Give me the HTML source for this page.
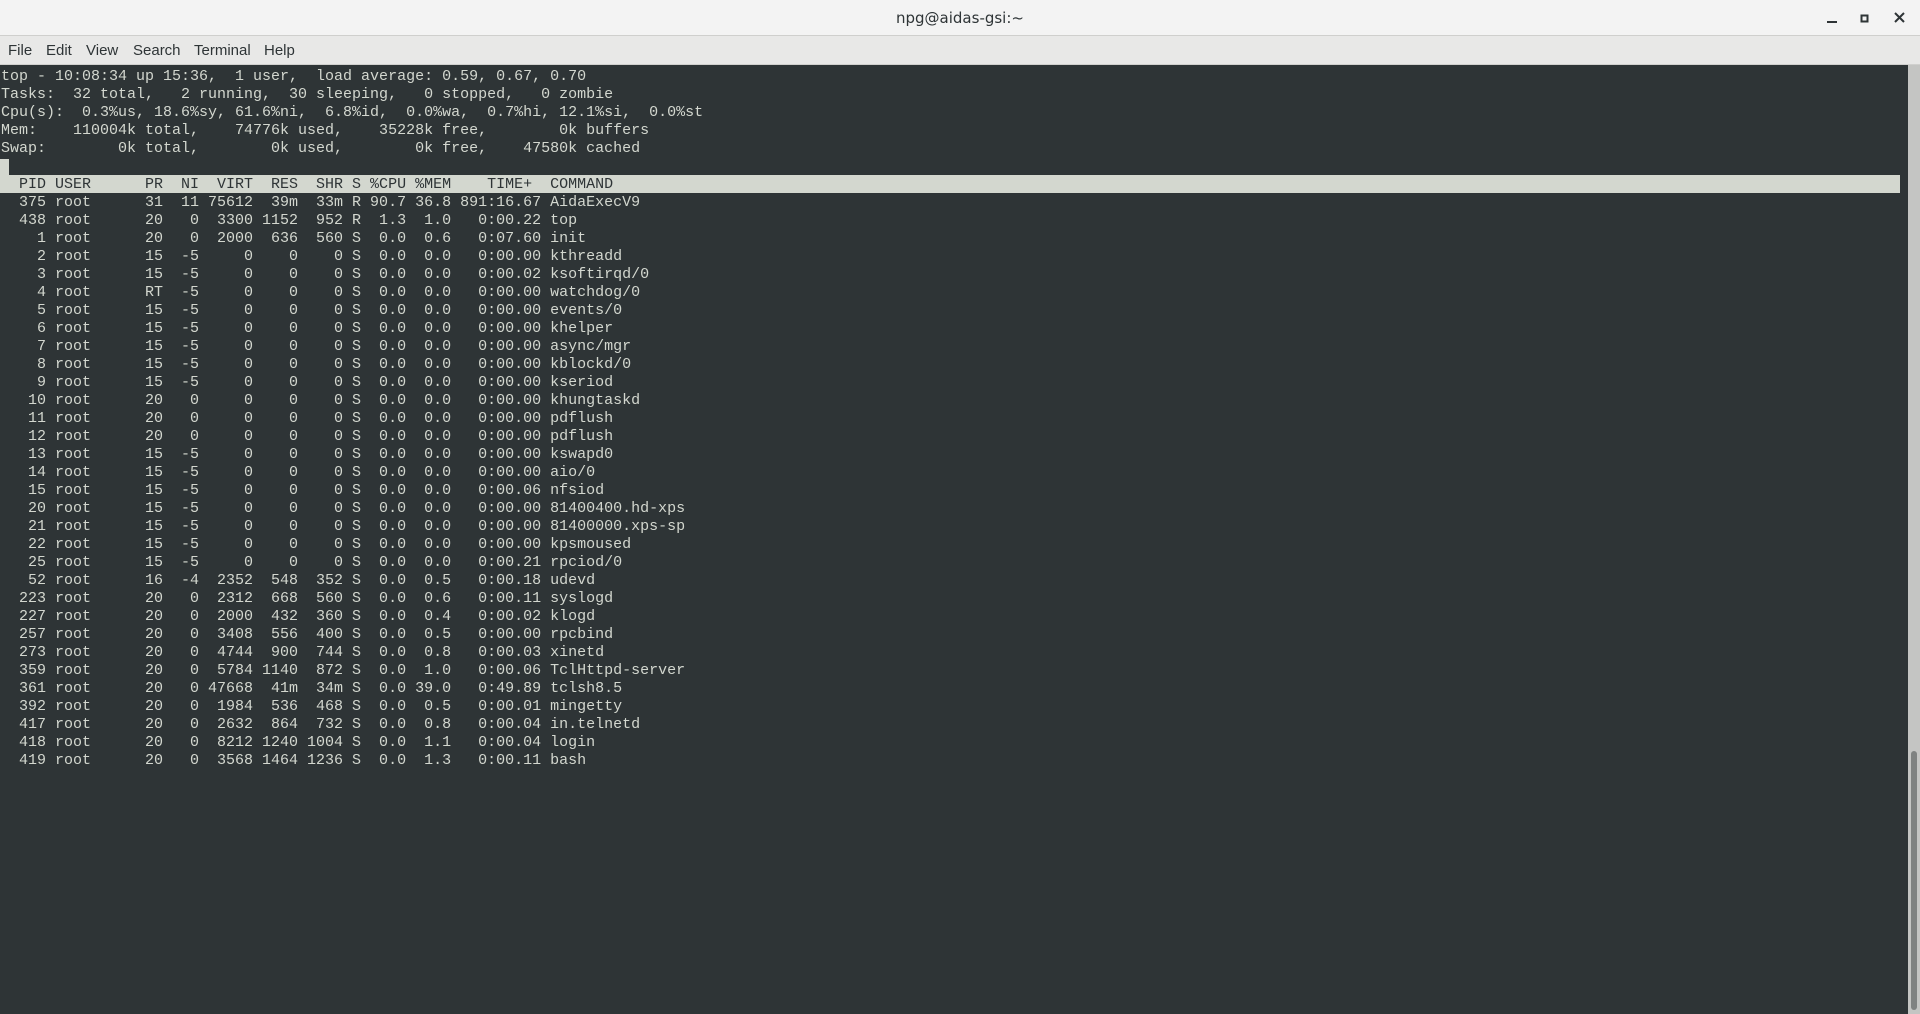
<!DOCTYPE html>
<html><head><meta charset="utf-8"><style>
html,body{margin:0;padding:0;width:1920px;height:1014px;overflow:hidden;background:#2e3436}
#title{position:absolute;left:0;top:0;width:1920px;height:35px;background:#f3f3f3;border-bottom:1px solid #cfcfcd;font:15px "DejaVu Sans",sans-serif;color:#2e3436;text-align:center;line-height:36px}
#menu{position:absolute;left:0;top:36px;width:1920px;height:28px;background:#e8e8e7;border-bottom:1px solid #d0d0ce;font:15px "Liberation Sans",sans-serif;color:#2e3436}
#menu span{position:absolute;top:6px}
#term{position:absolute;left:0;top:65px;width:1908px;height:949px;background:#2e3436}
pre{margin:0;position:absolute;left:1px;top:3px;font:15px/18px "Liberation Mono",monospace;color:#d3d7cf;letter-spacing:0}
.hl{position:absolute;left:0;top:110px;width:1900px;height:18px;background:#d3d7cf}
.cur{position:absolute;left:0;top:94px;width:9px;height:16px;background:#d3d7cf}
#sb{position:absolute;left:1908px;top:65px;width:12px;height:949px;background:#c4c5c3}
.ctl{position:absolute;top:11px}
</style></head><body>
<div id="title">npg@aidas-gsi:~</div>
<svg class="ctl" style="left:1826px" width="14" height="14"><rect x="1" y="10" width="10" height="2" fill="#2e3436"/></svg>
<svg class="ctl" style="left:1860px" width="14" height="14"><rect x="1.5" y="4.5" width="6" height="6" fill="none" stroke="#2e3436" stroke-width="2"/></svg>
<svg class="ctl" style="left:1893px" width="14" height="14"><path d="M2 2L11 11M11 2L2 11" stroke="#2e3436" stroke-width="2"/></svg>
<div id="menu"><span style="left:8px">File</span><span style="left:46px">Edit</span><span style="left:86px">View</span><span style="left:133px">Search</span><span style="left:194px">Terminal</span><span style="left:264px">Help</span></div>
<div id="term"><div class="hl"></div><div class="cur"></div>
<pre>top - 10:08:34 up 15:36,  1 user,  load average: 0.59, 0.67, 0.70
Tasks:  32 total,   2 running,  30 sleeping,   0 stopped,   0 zombie
Cpu(s):  0.3%us, 18.6%sy, 61.6%ni,  6.8%id,  0.0%wa,  0.7%hi, 12.1%si,  0.0%st
Mem:    110004k total,    74776k used,    35228k free,        0k buffers
Swap:        0k total,        0k used,        0k free,    47580k cached

<span style="color:#2e3436">  PID USER      PR  NI  VIRT  RES  SHR S %CPU %MEM    TIME+  COMMAND</span>
  375 root      31  11 75612  39m  33m R 90.7 36.8 891:16.67 AidaExecV9
  438 root      20   0  3300 1152  952 R  1.3  1.0   0:00.22 top
    1 root      20   0  2000  636  560 S  0.0  0.6   0:07.60 init
    2 root      15  -5     0    0    0 S  0.0  0.0   0:00.00 kthreadd
    3 root      15  -5     0    0    0 S  0.0  0.0   0:00.02 ksoftirqd/0
    4 root      RT  -5     0    0    0 S  0.0  0.0   0:00.00 watchdog/0
    5 root      15  -5     0    0    0 S  0.0  0.0   0:00.00 events/0
    6 root      15  -5     0    0    0 S  0.0  0.0   0:00.00 khelper
    7 root      15  -5     0    0    0 S  0.0  0.0   0:00.00 async/mgr
    8 root      15  -5     0    0    0 S  0.0  0.0   0:00.00 kblockd/0
    9 root      15  -5     0    0    0 S  0.0  0.0   0:00.00 kseriod
   10 root      20   0     0    0    0 S  0.0  0.0   0:00.00 khungtaskd
   11 root      20   0     0    0    0 S  0.0  0.0   0:00.00 pdflush
   12 root      20   0     0    0    0 S  0.0  0.0   0:00.00 pdflush
   13 root      15  -5     0    0    0 S  0.0  0.0   0:00.00 kswapd0
   14 root      15  -5     0    0    0 S  0.0  0.0   0:00.00 aio/0
   15 root      15  -5     0    0    0 S  0.0  0.0   0:00.06 nfsiod
   20 root      15  -5     0    0    0 S  0.0  0.0   0:00.00 81400400.hd-xps
   21 root      15  -5     0    0    0 S  0.0  0.0   0:00.00 81400000.xps-sp
   22 root      15  -5     0    0    0 S  0.0  0.0   0:00.00 kpsmoused
   25 root      15  -5     0    0    0 S  0.0  0.0   0:00.21 rpciod/0
   52 root      16  -4  2352  548  352 S  0.0  0.5   0:00.18 udevd
  223 root      20   0  2312  668  560 S  0.0  0.6   0:00.11 syslogd
  227 root      20   0  2000  432  360 S  0.0  0.4   0:00.02 klogd
  257 root      20   0  3408  556  400 S  0.0  0.5   0:00.00 rpcbind
  273 root      20   0  4744  900  744 S  0.0  0.8   0:00.03 xinetd
  359 root      20   0  5784 1140  872 S  0.0  1.0   0:00.06 TclHttpd-server
  361 root      20   0 47668  41m  34m S  0.0 39.0   0:49.89 tclsh8.5
  392 root      20   0  1984  536  468 S  0.0  0.5   0:00.01 mingetty
  417 root      20   0  2632  864  732 S  0.0  0.8   0:00.04 in.telnetd
  418 root      20   0  8212 1240 1004 S  0.0  1.1   0:00.04 login
  419 root      20   0  3568 1464 1236 S  0.0  1.3   0:00.11 bash</pre></div>
<div id="sb"><div style="position:absolute;left:3px;top:686px;width:6px;height:259px;background:#7f8281;border-radius:3px"></div></div>
</body></html>
